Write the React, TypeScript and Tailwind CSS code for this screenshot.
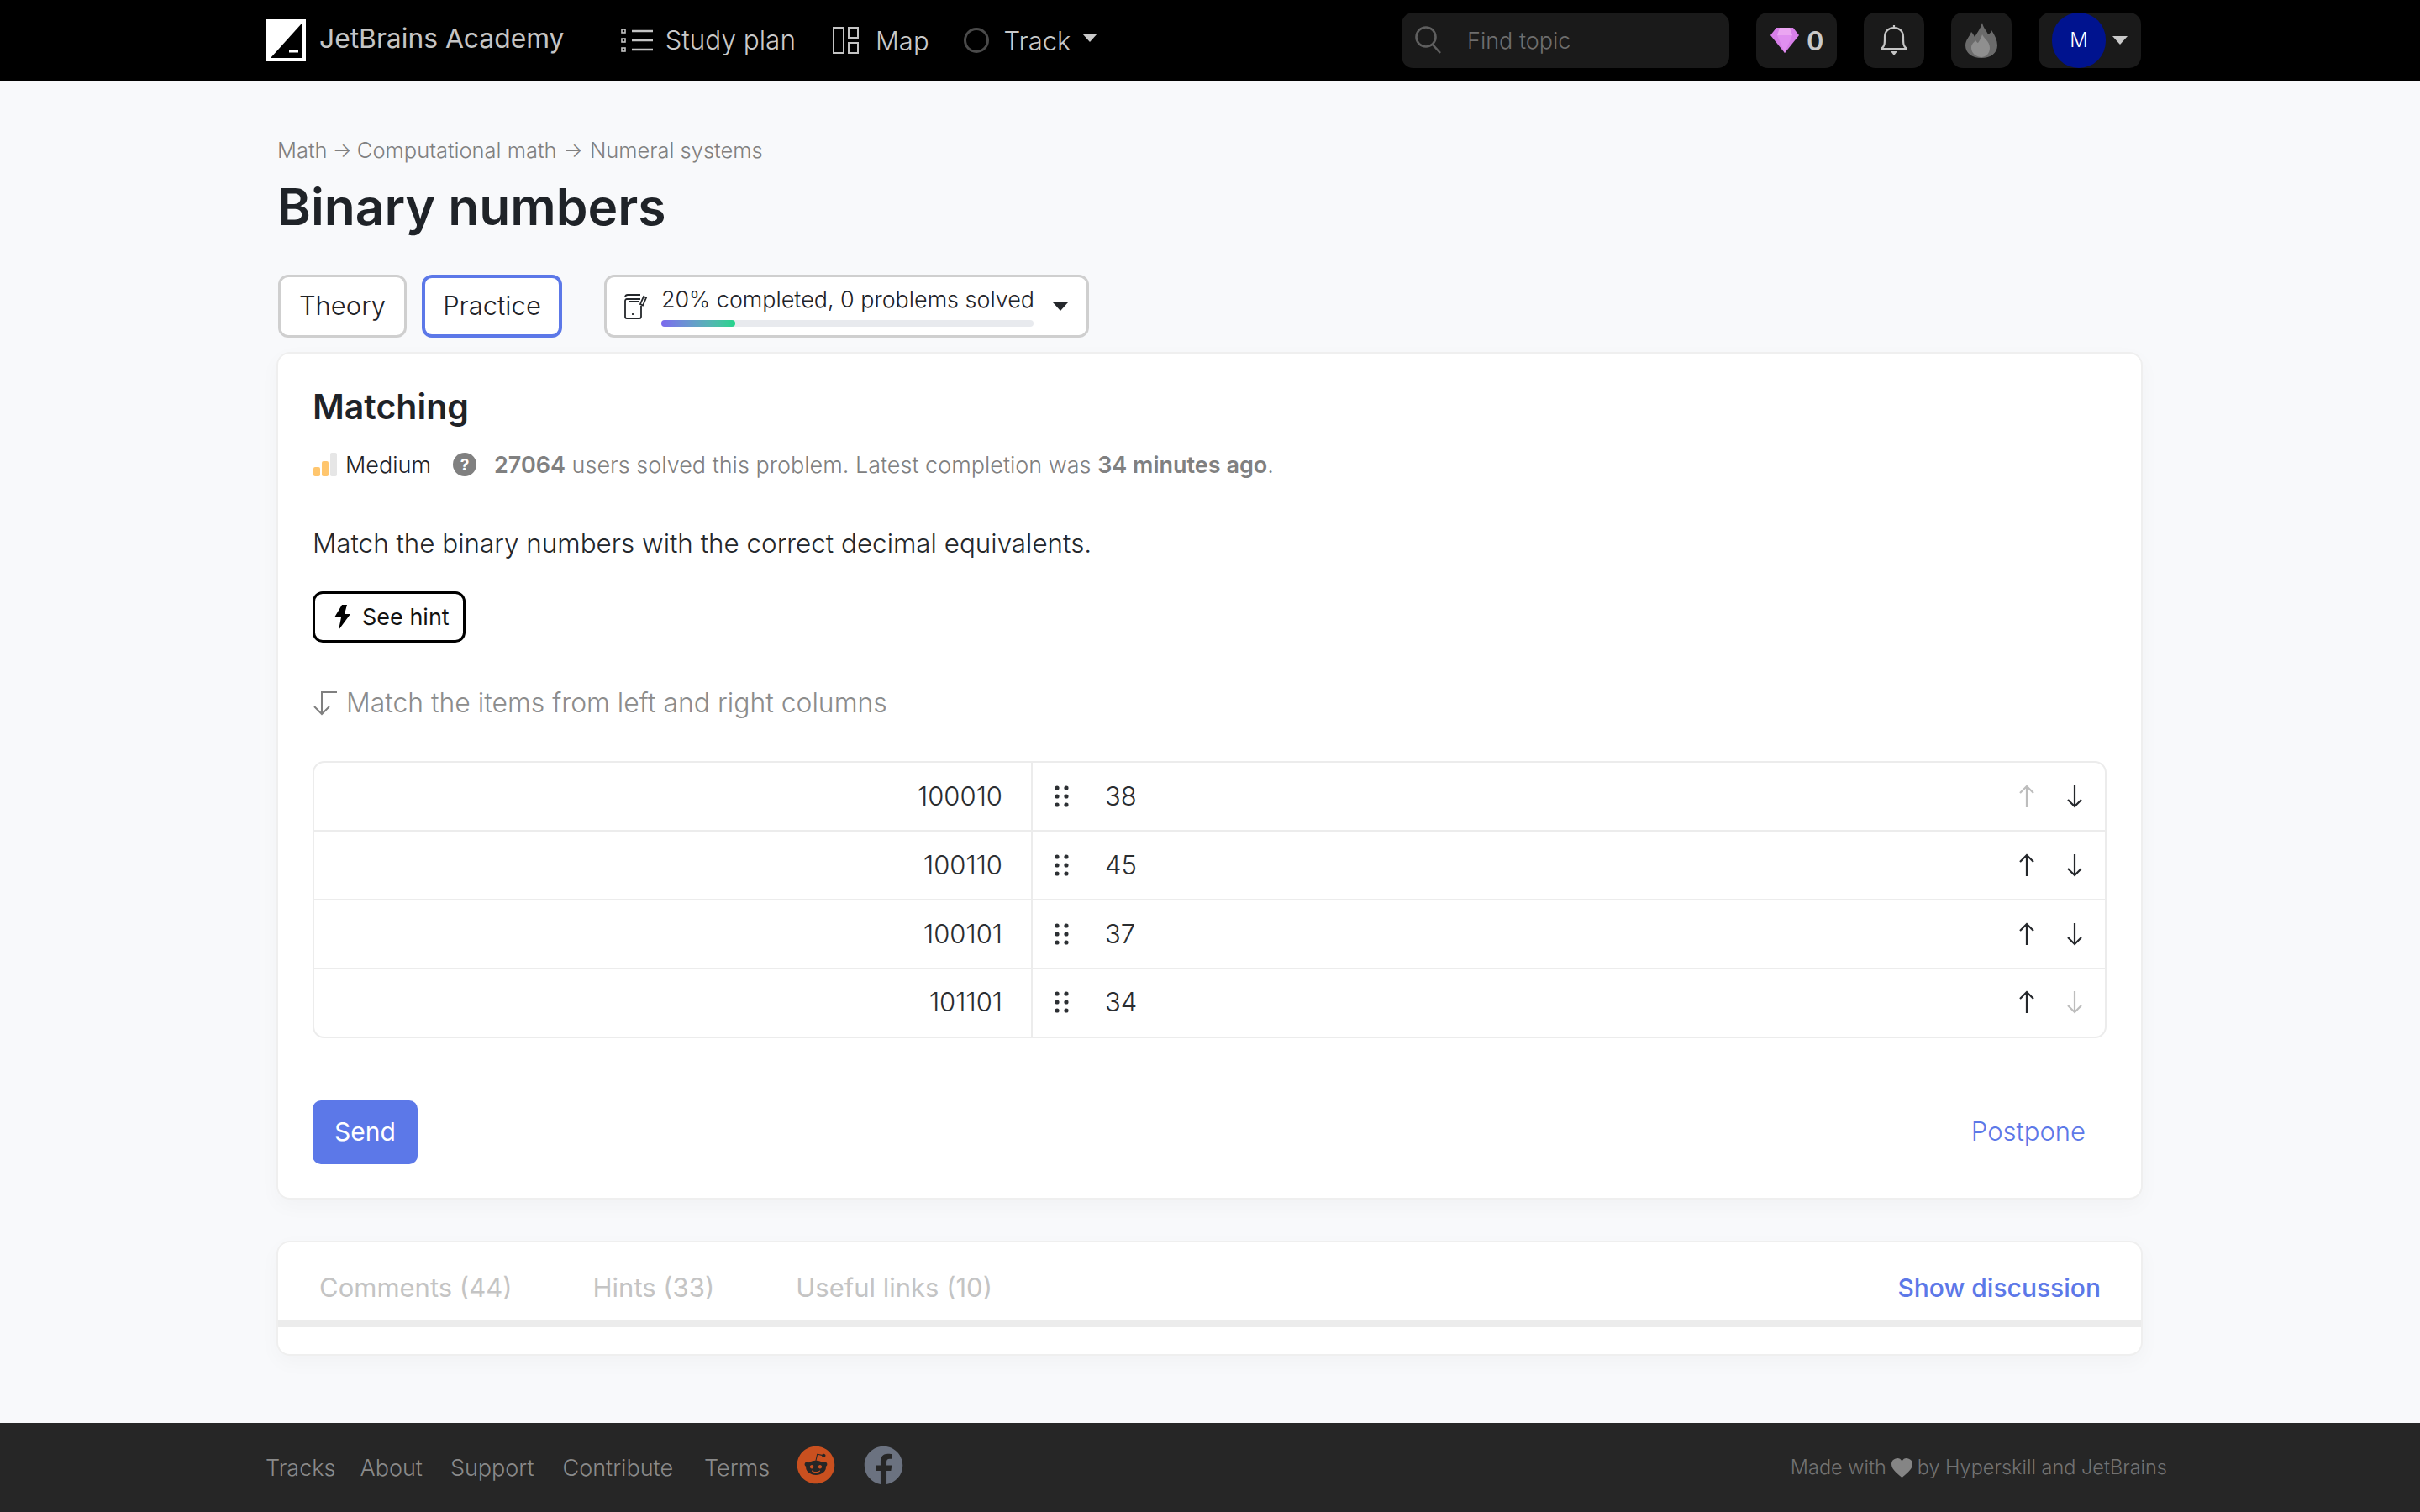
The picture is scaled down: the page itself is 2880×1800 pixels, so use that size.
import React from "react";
import { FaReddit, FaFacebook } from "react-icons/fa";

function Arrow({ up, faint }: { up?: boolean; faint?: boolean }) {
  return (
    <svg width="18" height="28" viewBox="0 0 18 28" fill="none" stroke={faint ? "#bdbdbd" : "#24272b"} strokeWidth="2.2">
      {up ? <path d="M9 27V2M1 10l8-8 8 8" /> : <path d="M9 1v25M1 18l8 8 8-8" />}
    </svg>
  );
}

function Dots() {
  return (
    <svg width="17" height="26" viewBox="0 0 17 26" fill="#2c2f33">
      {[3, 13, 23].map((y) => (
        <g key={y}>
          <circle cx="3" cy={y} r="2.6" />
          <circle cx="14" cy={y} r="2.6" />
        </g>
      ))}
    </svg>
  );
}

function Caret({ color }: { color: string }) {
  return (
    <svg width="18" height="10" viewBox="0 0 18 10" fill={color}>
      <path d="M0 0h18L9 10z" />
    </svg>
  );
}

const rows = [
  ["100010", "38", true, false],
  ["100110", "45", false, false],
  ["100101", "37", false, false],
  ["101101", "34", false, true],
] as const;

export default function App() {
  return (
    <div className="flex min-h-screen flex-col bg-[#f8f9fb] font-light [font-family:Inter,sans-serif] text-[#1f2328]">
      <header className="flex h-[96px] shrink-0 items-center bg-black pl-[316px] pr-[332px]">
        <svg width="48" height="50" viewBox="0 0 48 50" className="shrink-0">
          <rect width="48" height="50" fill="#fff" />
          <path d="M43 5V46H6z" fill="#000" />
          <rect x="28" y="36" width="11" height="3.5" fill="#fff" />
        </svg>
        <span className="ml-[16px] -translate-y-[2px] text-[31.8px] font-normal leading-none text-[#c4c4c4]">JetBrains Academy</span>

        <svg width="38" height="30" viewBox="0 0 38 30" fill="none" stroke="#c4c4c4" className="ml-[68px] shrink-0">
          <g strokeWidth="1.6">
            <rect x="1" y="2" width="4" height="4" />
            <rect x="1" y="13" width="4" height="4" />
            <rect x="1" y="24" width="4" height="4" />
          </g>
          <path d="M13 4h25M13 15h25M13 26h25" strokeWidth="2.4" />
        </svg>
        <span className="ml-[14px] text-[31.5px] leading-none text-[#c9c9c9]">Study plan</span>

        <svg width="31" height="32" viewBox="0 0 31 32" fill="none" stroke="#c4c4c4" strokeWidth="2" className="ml-[44px] shrink-0">
          <rect x="1" y="1" width="12" height="30" />
          <rect x="19" y="1" width="11" height="12" />
          <rect x="19" y="19" width="11" height="12" />
        </svg>
        <span className="ml-[20px] text-[31px] leading-none text-[#c9c9c9]">Map</span>

        <div className="ml-[41px] h-[30px] w-[30px] shrink-0 rounded-full border-[3px] border-[#4a4a4a]" />
        <span className="ml-[18px] text-[31px] leading-none text-[#c9c9c9]">Track</span>
        <span className="ml-[14px] flex -translate-y-[3px]"><Caret color="#c9c9c9" /></span>

        <div className="ml-auto flex h-[66px] w-[390px] items-center rounded-[14px] bg-[#1a1a1a] pl-[16px]">
          <svg width="32" height="34" viewBox="0 0 32 34" fill="none" stroke="#5f5f5f" strokeWidth="2.6">
            <circle cx="13" cy="13" r="11.5" />
            <path d="M21 22l9 10" />
          </svg>
          <span className="ml-[30px] text-[27px] leading-none text-[#6e6e6e]">Find topic</span>
        </div>

        <div className="ml-[32px] flex h-[66px] w-[96px] items-center rounded-[14px] bg-[#1a1a1a] pl-[17px]">
          <svg width="34" height="30" viewBox="0 0 34 30">
            <path d="M7 0h20l7 9-17 21L0 9z" fill="#d77fe8" />
            <path d="M11 0h12l3 9H8z" fill="#eba6f2" />
            <path d="M8 9h18L17 30z" fill="#e08ff0" />
          </svg>
          <span className="ml-[9px] text-[31px] font-semibold leading-none text-[#c9c9c9]">0</span>
        </div>

        <div className="ml-[32px] flex h-[66px] w-[72px] items-center justify-center rounded-[14px] bg-[#1a1a1a]">
          <svg width="32" height="38" viewBox="0 0 32 38" fill="none" stroke="#c4c4c4" strokeWidth="2.2">
            <path d="M1 29c4-3 4-6 4-14 0-7 5-11 11-11s11 4 11 11c0 8 0 11 4 14z" />
            <path d="M16 1v3" />
            <path d="M12 32h8l-4 5z" fill="#c4c4c4" stroke="none" />
          </svg>
        </div>

        <div className="ml-[32px] flex h-[66px] w-[72px] items-center justify-center rounded-[14px] bg-[#1a1a1a]">
          <svg width="38" height="42" viewBox="0 0 38 42">
            <path d="M20 0c1 6 5 9 7 14 2-1 4-3 4-5 4 6 7 12 7 18 0 9-8 15-19 15S0 36 0 27c0-7 5-10 7-16 2 2 3 4 4 6 3-5 7-10 9-17z" fill="#6b6b6b" />
            <path d="M20 14c2 5 9 8 9 16 0 7-5 11-10 11S7 37 7 30c0-5 3-6 5-9 1 1 2 3 3 3 2-3 4-6 5-10z" fill="#8f8f8f" />
          </svg>
        </div>

        <div className="ml-[32px] flex h-[66px] w-[122px] items-center rounded-[14px] bg-[#1a1a1a] pl-[16px]">
          <div className="flex h-[66px] w-[64px] items-center justify-center rounded-full bg-[#00138f] text-[24px] leading-none text-white">M</div>
          <span className="ml-[8px] flex"><Caret color="#c9c9c9" /></span>
        </div>
      </header>

      <main className="flex-1 pl-[329px] pr-[330px] pt-[68px]">
        <div className="flex h-[30px] items-center whitespace-pre pl-[1px] text-[25.5px] leading-none text-[#808080]">
          Math <span className="-mx-[1px] text-[24px]">→</span> Computational math <span className="mx-[1px] text-[24px]">→</span> Numeral systems
        </div>
        <h1 className="mt-[17px] pl-[1px] text-[60.5px] font-semibold leading-[70px] text-[#1f2328]">Binary numbers</h1>

        <div className="mt-[46px] flex h-[75px] pl-[2px]">
          <div className="flex w-[153px] items-center justify-center rounded-[12px] border-[3px] border-[#cfcfcf] bg-white text-[31px]">Theory</div>
          <div className="ml-[18px] flex w-[167px] items-center justify-center rounded-[12px] border-[4px] border-[#5c78e8] bg-white text-[31px]">Practice</div>
          <div className="ml-[50px] flex w-[577px] items-center rounded-[12px] border-[3px] border-[#cfcfcf] bg-white pl-[21px]">
            <svg width="28" height="30" viewBox="0 0 28 30" fill="none" stroke="#24272b" strokeWidth="1.8" className="shrink-0">
              <path d="M19 6H3a2 2 0 0 0-2 2v19a2 2 0 0 0 2 2h15a2 2 0 0 0 2-2V14" />
              <path d="M1 4c0-2 1-3 3-3h15M5 9h12" />
              <path d="M23 3l3 1.5-4 9-3-1.5z" />
              <path d="M9 24h3" />
            </svg>
            <div className="ml-[16px] w-[443px]">
              <div className="whitespace-nowrap text-[26.9px] leading-[32px]">20% completed, 0 problems solved</div>
              <div className="mt-[9px] h-[8px] w-full rounded-full bg-[#e8eaee]">
                <div className="h-full w-[88px] rounded-full bg-gradient-to-r from-[#7b68ee] to-[#20d58a]" />
              </div>
            </div>
            <span className="ml-[23px] flex"><Caret color="#24272b" /></span>
          </div>
        </div>

        <section className="mt-[17px] rounded-[16px] border-2 border-[#efefef] bg-white px-[41px] pb-[40px] pt-[37px] shadow-[0_8px_24px_rgba(0,0,0,0.03)]">
          <h2 className="text-[41px] font-semibold leading-[52px]">Matching</h2>

          <div className="mt-[27px] flex h-[32px] items-center text-[27px] leading-none">
            <svg width="30" height="28" viewBox="0 0 30 28" className="shrink-0">
              <rect x="1" y="17" width="8" height="11" rx="2" fill="#ffc66e" />
              <rect x="11" y="10" width="8" height="18" rx="2" fill="#ffc66e" />
              <rect x="21" y="0" width="8" height="28" rx="2" fill="#e6e6e6" />
            </svg>
            <span className="ml-[9px] font-light text-[#1f2328]">Medium</span>
            <span className="ml-[26px] flex h-[28px] w-[28px] items-center justify-center rounded-full bg-[#808080] text-[19px] font-bold leading-none text-white">?</span>
            <span className="ml-[21px] text-[27px] text-[#808080]">
              <b className="font-semibold">27064</b> users solved this problem. Latest completion was <b className="font-semibold">34 minutes ago</b>.
            </span>
          </div>

          <p className="mt-[60px] text-[31.4px] leading-[36px] text-[#24272b]">Match the binary numbers with the correct decimal equivalents.</p>

          <button className="mt-[39px] flex h-[61px] w-[182px] items-center rounded-[12px] border-[3px] border-black bg-white pl-[22px] text-[27px] font-normal leading-none text-[#111]">
            <svg width="20" height="30" viewBox="0 0 20 30" fill="#000" className="shrink-0">
              <path d="M10 0h6l-3 11h7L6 30l3-15H1z" />
            </svg>
            <span className="ml-[14px]">See hint</span>
          </button>

          <div className="mt-[54px] flex h-[36px] items-center">
            <svg width="30" height="30" viewBox="0 0 30 30" fill="none" stroke="#808080" strokeWidth="2" className="shrink-0">
              <path d="M29 2H11v26M2 19l9 9 9-9" />
            </svg>
            <span className="ml-[10px] text-[31.9px] leading-none text-[#8c8c8c]">Match the items from left and right columns</span>
          </div>

          <div className="mt-[51px] rounded-[14px] border-2 border-[#ececec]">
            {rows.map(([left, right, upFaint, downFaint], i) => (
              <div key={left} className={i < 3 ? "flex h-[82px] border-b-2 border-[#ececec] text-[31px] text-[#2a2d31]" : "flex h-[80px] text-[31px] text-[#2a2d31]"}>
                <div className={i < 3 ? "flex w-[855px] items-center justify-end border-r-2 border-[#ececec] pr-[34px]" : "flex w-[855px] items-center justify-end border-r-2 border-[#ececec] pb-[2px] pr-[34px]"}>{left}</div>
                <div className={i < 3 ? "flex flex-1 items-center pl-[26px] pr-[27px]" : "flex flex-1 items-center pb-[2px] pl-[26px] pr-[27px]"}>
                  <Dots />
                  <span className="ml-[43px] flex-1">{right}</span>
                  <Arrow up faint={upFaint} />
                  <span className="ml-[39px] flex"><Arrow faint={downFaint} /></span>
                </div>
              </div>
            ))}
          </div>

          <div className="mt-[74px] flex items-center justify-between">
            <button className="flex h-[76px] w-[125px] items-center justify-center rounded-[10px] bg-[#5c78e8] pb-[3px] text-[30px] font-normal leading-none text-white">Send</button>
            <span className="pb-[3px] pr-[25px] text-[31px] leading-none text-[#5c78e8]">Postpone</span>
          </div>
        </section>

        <section className="mt-[49px] overflow-hidden rounded-[16px] border-2 border-[#efefef] bg-white pb-[32px] shadow-[0_8px_24px_rgba(0,0,0,0.03)]">
          <div className="flex h-[93px] items-center pb-0 pl-[49px] pr-[48px] pt-[14px] text-[31px] leading-none">
            <span className="font-normal text-[#c4c4c4]">Comments (44)</span>
            <span className="ml-[96px] font-normal text-[#c4c4c4]">Hints (33)</span>
            <span className="ml-[97px] font-normal text-[#c4c4c4]">Useful links (10)</span>
            <span className="ml-auto text-[30px] font-medium text-[#5c78e8]">Show discussion</span>
          </div>
          <div className="h-[8px] bg-[#ececec]" />
        </section>
      </main>

      <footer className="mt-[80px] flex h-[106px] shrink-0 items-center bg-[#262626] pl-[316px] pr-[301px] text-[27px] leading-none text-[#8a8a8a]">
        <span>Tracks</span>
        <span className="ml-[29px]">About</span>
        <span className="ml-[33px]">Support</span>
        <span className="ml-[34px]">Contribute</span>
        <span className="ml-[37px]">Terms</span>
        <FaReddit className="ml-[32px] -translate-y-[3px]" size={46} color="#c9501f" />
        <FaFacebook className="ml-[34px] -translate-y-[3px]" size={47} color="#6b7280" />
        <span className="ml-auto flex items-center text-[23.5px] text-[#727272]">
          Made with
          <svg width="25" height="23" viewBox="0 0 25 23" fill="#858585" className="mx-[6px]">
            <path d="M12.5 23C4 16 0 12 0 7a6.7 6.7 0 0 1 12.5-3.5A6.7 6.7 0 0 1 25 7c0 5-4 9-12.500 16z" />
          </svg>
          by Hyperskill and JetBrains
        </span>
      </footer>
    </div>
  );
}
